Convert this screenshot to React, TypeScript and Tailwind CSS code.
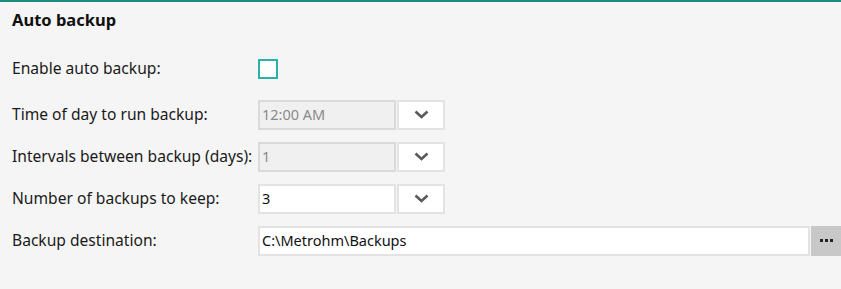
import React from "react";

const Chevron = () => (
  <svg width="15" height="9" viewBox="0 0 15 9" fill="none">
    <path d="M1.5 1.5 L7.5 7 L13.5 1.5" stroke="#5a5a5a" strokeWidth="2.6" />
  </svg>
);

function ComboField({ value, disabled }: { value: string; disabled?: boolean }) {
  return (
    <div className="flex h-[30px] gap-px">
      <div
        className={`flex w-[138px] items-center border-2 px-[2px] text-[14.5px] ${
          disabled ? "border-[#dadada] bg-[#f0f0f0] text-[#8a8a8a]" : "border-[#e3e3e3] bg-white text-[#111]"
        }`}
      >
        {value}
      </div>
      <button className="flex w-[48px] items-center justify-center border-2 border-[#e3e3e3] bg-white">
        <Chevron />
      </button>
    </div>
  );
}

export default function App() {
  const labelCls = "flex h-[30px] items-center text-[15.6px] text-[#1a1a1a]";
  return (
    <div
      className="h-[289px] w-[841px] border-t-2 border-[#1f8a7e] bg-[#f5f5f5]"
      style={{ fontFamily: '"Noto Sans", "Open Sans", sans-serif' }}
    >
      <h2 className="pl-3 pt-[6px] text-[16.5px] font-bold text-[#111]">Auto backup</h2>
      <div className="mt-[21px] grid grid-cols-[246px_1fr] gap-y-3 pl-3">
        <div className={labelCls}>Enable auto backup:</div>
        <div className="flex h-[30px] items-center">
          <div className="h-[20px] w-[20px] border-2 border-[#2ab3a6] bg-white" />
        </div>

        <div className={`${labelCls} mt-[4px]`}>Time of day to run backup:</div>
        <div className="mt-[4px]">
          <ComboField value="12:00 AM" disabled />
        </div>

        <div className={labelCls}>Intervals between backup (days):</div>
        <ComboField value="1" disabled />

        <div className={labelCls}>Number of backups to keep:</div>
        <ComboField value="3" />

        <div className={labelCls}>Backup destination:</div>
        <div className="flex h-[30px]">
          <div className="flex flex-1 items-center border-2 border-[#e3e3e3] bg-white px-[2px] text-[14.5px] text-[#111]">
            C:\Metrohm\Backups
          </div>
          <button className="ml-px flex w-[30px] items-center justify-center gap-[2px] bg-[#c8c8c8]">
            <span className="h-[3px] w-[3px] bg-[#222]" />
            <span className="h-[3px] w-[3px] bg-[#222]" />
            <span className="h-[3px] w-[3px] bg-[#222]" />
          </button>
        </div>
      </div>
    </div>
  );
}
